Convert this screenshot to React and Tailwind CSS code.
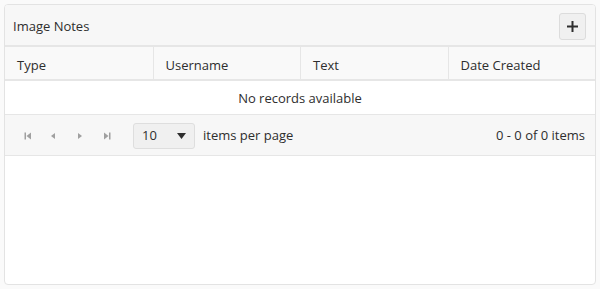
import React from "react";

const columns = ["Type", "Username", "Text", "Date Created"];

function PagerIcon({ kind }) {
  // small kendo-style seek arrows
  return (
    <svg width="10" height="10" viewBox="0 0 10 10" className="fill-[#a0a0a0]">
      {kind === "first" && (
        <>
          <rect x="1.5" y="1.5" width="1.5" height="7" />
          <path d="M8 1.5 L3.5 5 L8 8.5 Z" />
        </>
      )}
      {kind === "prev" && <path d="M7 2 L3 5 L7 8 Z" />}
      {kind === "next" && <path d="M3 2 L7 5 L3 8 Z" />}
      {kind === "last" && (
        <>
          <path d="M2 1.5 L6.5 5 L2 8.5 Z" />
          <rect x="7" y="1.5" width="1.5" height="7" />
        </>
      )}
    </svg>
  );
}

export default function App() {
  return (
    <div className="h-[289px] w-[600px] bg-[#fafafa] p-[4px] font-['Open_Sans',sans-serif] text-[13px] text-[#2e2e2e]">
      <div className="flex h-[281px] flex-col overflow-hidden rounded-[4px] border border-[#e3e3e3] bg-white">
        <div className="flex h-[42px] items-center justify-between border-b-2 border-[#e6e6e6] bg-[#f7f7f7] pl-[8px] pr-[9px] pt-[2px]">
          <span className="pt-[2px]">Image Notes</span>
          <button
            type="button"
            className="flex h-[27px] w-[27px] items-center justify-center rounded-[3px] border border-[#dcdcdc] bg-[#f0f0f0]"
          >
            <svg width="11" height="11" viewBox="0 0 11 11" className="fill-[#2e2e2e]">
              <rect x="4.5" y="0" width="2" height="11" />
              <rect x="0" y="4.5" width="11" height="2" />
            </svg>
          </button>
        </div>
        <div className="grid h-[34px] grid-cols-4 border-b-2 border-[#e6e6e6] bg-[#f9f9f9]">
          {columns.map((c, i) => (
            <div
              key={c}
              className={`flex items-center pl-[12px] pt-[6px] ${i > 0 ? "border-l border-[#e6e6e6]" : ""}`}
            >
              {c}
            </div>
          ))}
        </div>
        <div className="flex h-[33px] items-center justify-center pt-[2px]">No records available</div>
        <div className="flex h-[42px] items-center border-y border-[#e6e6e6] bg-[#f7f7f7] pr-[10px] pt-[2px]">
          <div className="flex items-center">
            <span className="flex w-[28px] justify-end"><PagerIcon kind="first" /></span>
            <span className="ml-[15px]"><PagerIcon kind="prev" /></span>
            <span className="ml-[17px]"><PagerIcon kind="next" /></span>
            <span className="ml-[17px]"><PagerIcon kind="last" /></span>
          </div>
          <div className="ml-[21px] flex h-[26px] w-[62px] items-center justify-between rounded-[3px] border border-[#dedede] bg-[#f0f0f0] pl-[8px] pr-[8px]">
            <span>10</span>
            <svg width="9" height="6" viewBox="0 0 9 6" className="fill-[#2e2e2e]">
              <path d="M0 0 L9 0 L4.5 6 Z" />
            </svg>
          </div>
          <span className="ml-[8px]">items per page</span>
          <span className="ml-auto">0 - 0 of 0 items</span>
        </div>
        <div className="flex-1" />
      </div>
    </div>
  );
}
